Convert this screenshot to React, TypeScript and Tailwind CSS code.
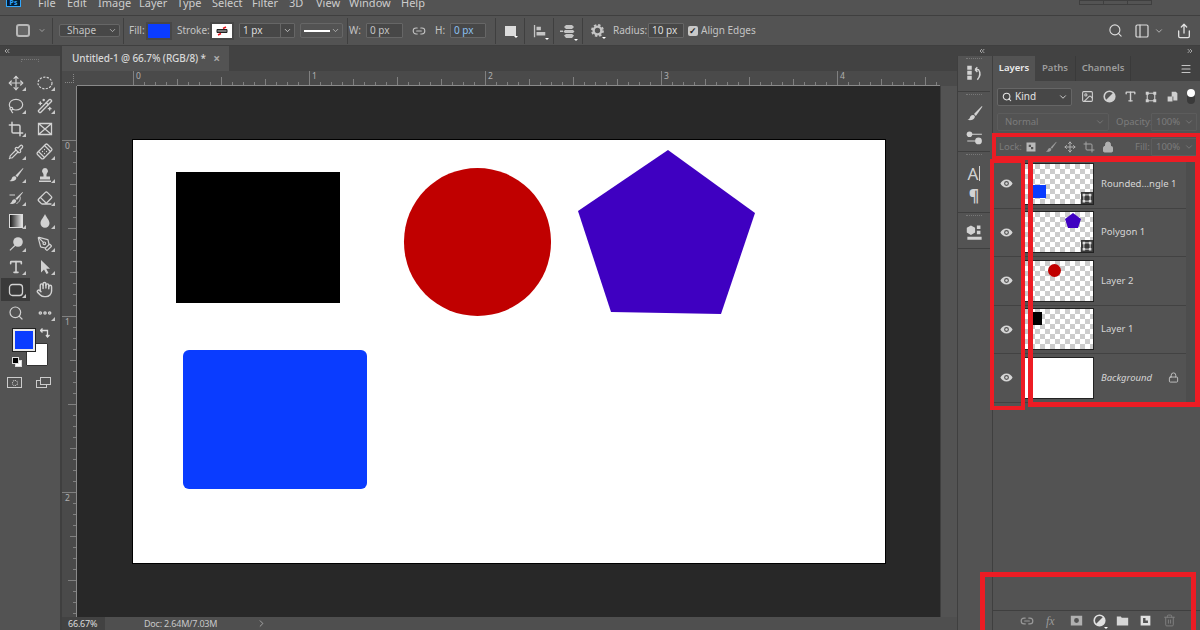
import type { ReactNode } from 'react'
import {
  Bandage, ChevronDown, ChevronRight, ChevronsLeft, ChevronsRight, Crop, Ellipsis, Eraser, Hand, Image,
  Lasso, Link2, Lock, Menu, Move, PanelLeft, PenTool, Pipette, Search, Share, Trash2, Type, WandSparkles,
} from 'lucide-react'

const font = { fontFamily: '"Noto Sans", "Open Sans", sans-serif' }
const menus = [
  ['File', 'w-[29px]'], ['Edit', 'w-[31px]'], ['Image', 'w-[41px]'], ['Layer', 'w-[38px]'], ['Type', 'w-[35px]'],
  ['Select', 'w-[40px]'], ['Filter', 'w-[37px]'], ['3D', 'w-[27px]'], ['View', 'w-[33px]'], ['Window', 'w-[52px]'], ['Help', 'w-[30px]'],
]

function Svg({ size = 16, className = '', children }: { size?: number; className?: string; children: ReactNode }) {
  return (
    <svg width={size} height={size} viewBox="0 0 16 16" fill="currentColor" className={className}>
      {children}
    </svg>
  )
}

const BrushIcon = ({ size = 16 }: { size?: number }) => (
  <Svg size={size}>
    <path d="M15 1 7.5 8.5l1.8 1.8L15.4 1.6z" />
    <path d="M6.6 9.3c-2 0-2.6 1.4-3 2.6-.3.9-1 1.5-2.3 2 2.8.9 6.2.3 7-2.4.3-1-.4-2.2-1.7-2.2z" />
  </Svg>
)

const HalfCircle = ({ size = 13, className = '' }: { size?: number; className?: string }) => (
  <Svg size={size} className={className}>
    <circle cx="8" cy="8" r="6.5" fill="none" stroke="currentColor" strokeWidth="2" />
    <path d="M12.6 3.4A6.5 6.5 0 0 1 3.4 12.6z" />
  </Svg>
)

const tools: { icon: ReactNode; active?: boolean; mark?: boolean }[] = [
  { icon: <Move size={16} strokeWidth={1.8} />, mark: true },
  { icon: <Svg><ellipse cx="8" cy="8" rx="7" ry="5.8" fill="none" stroke="currentColor" strokeWidth="1.2" strokeDasharray="2.2 1.3" /></Svg>, mark: true },
  { icon: <Lasso size={16} strokeWidth={1.8} />, mark: true },
  { icon: <WandSparkles size={16} strokeWidth={2} />, mark: true },
  { icon: <Crop size={16} strokeWidth={2.2} />, mark: true },
  { icon: <Svg><path d="M1.5 2.5h13v11h-13zM1.5 2.5l13 11M14.5 2.5l-13 11" fill="none" stroke="currentColor" strokeWidth="1.3" /></Svg> },
  { icon: <Pipette size={16} strokeWidth={1.8} />, mark: true },
  { icon: <Bandage size={17} strokeWidth={1.8} className="-rotate-45" />, mark: true },
  { icon: <BrushIcon />, mark: true },
  { icon: <Svg><path d="M8 1a3 3 0 0 0-2 5.2c.6.8.5 2 .5 3.3H3v3h10v-3H9.5c0-1.3-.1-2.5.5-3.3A3 3 0 0 0 8 1zM2 13.5h12V15H2z" /></Svg>, mark: true },
  { icon: <Svg><path d="M14.5 2 7.5 8.5 9 10l6-7.5zM6.5 9.3c-1.8 0-2.2 1.3-2.6 2.3-.3.9-1 1.4-2.2 1.9 2.5.9 5.8.3 6.5-2.3.2-1-.4-1.900-1.700-1.900z" /><path d="M12 6.5c1 3-1 6-3.5 7M1.5 5H7" fill="none" stroke="currentColor" /></Svg>, mark: true },
  { icon: <Eraser size={16} strokeWidth={2} />, mark: true },
  {
    icon: (
      <svg width="14" height="14" viewBox="0 0 14 14">
        <defs>
          <linearGradient id="grad">
            <stop offset="0" stopColor="#111" />
            <stop offset="1" stopColor="#eee" />
          </linearGradient>
        </defs>
        <rect x=".5" y=".5" width="13" height="13" fill="url(#grad)" stroke="#ddd" />
      </svg>
    ),
    mark: true,
  },
  { icon: <Svg><path d="M8 1c-.8 2.6-4.500 6-4.500 9.300a4.500 4.500 0 0 0 9 0C12.500 7 8.800 3.600 8 1z" /></Svg>, mark: true },
  { icon: <Svg><circle cx="10" cy="6" r="4.8" /><path d="M6.500 9 1.500 14l.8.8L7.300 10z" /></Svg>, mark: true },
  { icon: <PenTool size={16} strokeWidth={1.8} />, mark: true },
  { icon: <Type size={16} strokeWidth={2.4} />, mark: true },
  { icon: <Svg><path d="M4 1v12.500l3-3 2.500 4.500 2-1-2.300-4.300H13z" /></Svg>, mark: true },
  { icon: <Svg><rect x="1.5" y="2.5" width="13" height="11" rx="3" fill="none" stroke="currentColor" strokeWidth="1.3" /></Svg>, active: true, mark: true },
  { icon: <Hand size={17} strokeWidth={2} /> },
  { icon: <Search size={16} strokeWidth={1.8} /> },
  { icon: <Ellipsis size={16} strokeWidth={3.4} />, mark: true },
]

const layerRows = [
  { name: 'Rounded...ngle 1', thumb: <div className="absolute left-[8px] top-[21px] h-[13px] w-[13px] bg-[#0a3cff]" />, shape: true },
  {
    name: 'Polygon 1',
    thumb: (
      <svg className="absolute left-[40px] top-[1px]" width="16" height="16" viewBox="0 0 16 16">
        <path d="m8 0 8 6-3 9H3L0 6z" fill="#3f00c1" />
      </svg>
    ),
    shape: true,
  },
  { name: 'Layer 2', thumb: <div className="absolute left-[23px] top-[3px] h-[13px] w-[13px] rounded-full bg-[#c00000]" /> },
  { name: 'Layer 1', thumb: <div className="absolute left-[3px] top-[3px] h-[13px] w-[14px] bg-black" /> },
]

function Sep() {
  return <div className="h-[26px] w-px shrink-0 bg-[#3f3f3f]" />
}

function Field({ text, className = '' }: { text: string; className?: string }) {
  return (
    <div className={`flex h-[15px] shrink-0 items-center rounded-[1px] border border-[#666] bg-[#474747] pl-[3px] text-[10px] ${className}`}>
      {text}
    </div>
  )
}

function Corner() {
  return <div className="absolute bottom-[3px] right-[4px] h-0 w-0 border-b-[4px] border-l-[4px] border-b-[#c8c8c8] border-l-transparent" />
}

function Drop() {
  return <div className="absolute -bottom-[2px] -right-[2px] h-0 w-0 border-x-[2px] border-t-[2px] border-x-transparent border-t-white" />
}

function ToolPanel() {
  return (
    <div className="flex w-[62px] shrink-0 flex-col border-r-2 border-[#3f3f3f]">
      <div className="flex h-[10px] items-center bg-[#424242] pl-[3px] text-[#bbb]">
        <ChevronsLeft size={8} strokeWidth={2.5} />
      </div>
      <div className="mx-auto mt-[3px] h-[3px] w-[18px] border-x border-t border-dotted border-[#777]" />
      <div className="ml-px mt-[9px] grid w-[58px] grid-cols-2">
        {tools.map((tool, i) => (
          <div
            key={i}
            className={`relative flex h-[23px] w-[29px] items-center justify-center text-[#d2d2d2] ${tool.active ? 'bg-[#3a3a3a]' : ''}`}
          >
            {tool.icon}
            {tool.mark && <Corner />}
          </div>
        ))}
      </div>
      <div className="relative h-[46px]">
        <div className="absolute left-[26px] top-[19px] h-[23px] w-[22px] rounded-[1px] border border-[#333] bg-white" />
        <div className="absolute left-[13px] top-[5px] h-[22px] w-[22px] border-2 border-[#e8e8e8] bg-[#0a3cff] outline outline-1 outline-[#222]" />
        <svg className="absolute left-[40px] top-[4px] text-[#ddd]" width="10" height="10" viewBox="0 0 10 10" fill="none" stroke="currentColor" strokeWidth="1.3">
          <path d="M0.5 2.5h7v6M6 7l1.5 2L9.5 7M2.5 .5 .5 2.5l2 2" />
        </svg>
        <div className="absolute left-[15px] top-[36px] h-[7px] w-[7px] border border-[#ddd] bg-white" />
        <div className="absolute left-[12px] top-[33px] h-[7px] w-[7px] border border-[#ddd] bg-black" />
      </div>
      <div className="ml-[7px] mt-[7px] flex items-center">
        <div className="flex h-[11px] w-[15px] items-center justify-center border border-[#ccc]">
          <div className="h-[6px] w-[6px] rounded-full border border-dotted border-[#ddd]" />
        </div>
        <div className="relative ml-[14px] h-[11px] w-[15px]">
          <div className="absolute bottom-0 left-0 h-[8px] w-[11px] border border-[#ccc]" />
          <div className="absolute right-0 top-0 h-[8px] w-[11px] border border-[#ccc] bg-[#535353]" />
        </div>
      </div>
    </div>
  )
}

function HorizontalRuler() {
  const labels = ['0', '1', '2', '3', '4']
  return (
    <svg width="863" height="15" className="block">
      {Array.from({ length: 78 }, (_, i) => {
        const h = i % 16 === 0 ? 15 : i % 8 === 0 ? 8 : i % 4 === 0 ? 6 : 3
        const x = 56.5 + i * 11
        return <line key={i} x1={x} x2={x} y1={14} y2={14 - h} stroke="#808080" />
      })}
      {labels.map((label, i) => (
        <text key={label} x={59 + i * 176} y={8} fontSize="8.5" fill="#b0b0b0" style={font}>
          {label}
        </text>
      ))}
      <line x1="0" x2="863" y1="14.5" y2="14.5" stroke="#8a8a8a" />
    </svg>
  )
}

function VerticalRuler() {
  return (
    <svg width="15" height="531" className="block shrink-0">
      {Array.from({ length: 49 }, (_, i) => {
        const h = i % 16 === 0 ? 15 : i % 8 === 0 ? 8 : i % 4 === 0 ? 6 : 3
        const y = 54.5 + i * 11
        return <line key={i} x1={14} x2={14 - h} y1={y} y2={y} stroke="#808080" />
      })}
      {['0', '1', '2'].map((label, i) => (
        <text key={label} x={3} y={63 + i * 176} fontSize="8.5" fill="#b0b0b0" style={font}>
          {label}
        </text>
      ))}
      <line x1="14.5" x2="14.5" y1="0" y2="531" stroke="#8a8a8a" />
    </svg>
  )
}

function Workspace() {
  return (
    <div className="flex w-[895px] shrink-0 flex-col">
      <div className="flex h-[25px] shrink-0 bg-[#424242]">
        <div className="flex w-[167px] items-center whitespace-nowrap bg-[#535353] pl-[10px] text-[10px] font-medium tracking-[-0.1px] text-[#d8d8d8]">
          Untitled-1 @ 66.7% (RGB/8) *
          <span className="ml-auto mr-[9px] text-[12px] font-bold leading-none text-[#aaa]">×</span>
        </div>
      </div>
      <div className="flex h-[15px] shrink-0 bg-[#4a4a4a]">
        <div className="flex h-[15px] w-[15px] items-center justify-center">
          <div className="h-[9px] w-[9px] border-b border-r border-dotted border-[#888]" />
        </div>
        <HorizontalRuler />
      </div>
      <div className="flex h-[531px] shrink-0 bg-[#4a4a4a]">
        <VerticalRuler />
        <div className="flex w-[863px] shrink-0 items-center justify-center bg-[#282828]">
          <div className="relative h-[423px] w-[752px] bg-white outline outline-1 outline-black">
            <div className="absolute left-[43px] top-[32px] h-[131px] w-[164px] bg-black" />
            <div className="absolute left-[271px] top-[28px] h-[148px] w-[147px] rounded-full bg-[#c00000]" />
            <svg className="absolute left-[445px] top-[10px]" width="177" height="164" viewBox="0 0 177 164">
              <path d="M90 0 177 63 143 164 33 162 0 61z" fill="#3f00c1" />
            </svg>
            <div className="absolute left-[50px] top-[210px] h-[139px] w-[184px] rounded-[6px] bg-[#0a3cff]" />
          </div>
        </div>
        <div className="w-[17px] border-l border-[#3f3f3f] bg-[#535353]" />
      </div>
      <div className="flex h-[13px] shrink-0 items-center bg-[#4f4f4f] text-[9px] tracking-[-0.2px] text-[#c8c8c8]">
        <div className="flex h-full w-[43px] items-center bg-[#424242] pl-[6px] text-[#dcdcdc]">66.67%</div>
        <div className="ml-[39px] w-[112px]">Doc: 2.64M/7.03M</div>
        <ChevronRight size={11} strokeWidth={1.5} />
      </div>
    </div>
  )
}

function DockGroup({ className, children }: { className: string; children: ReactNode }) {
  return (
    <div className={`flex flex-col items-center border-b border-[#3f3f3f] pt-[2px] text-[#d2d2d2] ${className}`}>
      <div className="mb-[5px] h-[3px] w-[16px] border-t border-dotted border-[#777]" />
      {children}
    </div>
  )
}

function Dock() {
  return (
    <div className="flex w-[33px] shrink-0 flex-col border-l border-[#3f3f3f]">
      <DockGroup className="h-[36px]">
        <Svg size={18} className="-mt-[2px]">
          <path d="M2 1.5h4V5H2zM2 6h4v3.5H2zM2 10.5h4V14H2z" />
          <path d="M9 5h3c1.8 2.5 1.5 6-1 9M9 5l2-2M9 5l2 2" fill="none" stroke="currentColor" strokeWidth="1.3" />
        </Svg>
      </DockGroup>
      <DockGroup className="h-[60px]">
        <div className="mt-[3px]"><BrushIcon size={17} /></div>
        <div className="mt-[6px]">
          <Svg size={18}>
            <path d="M5 5h10v1H5zM2 11h10v1H2z" />
            <circle cx="4" cy="5.5" r="2.5" />
            <circle cx="12" cy="11.5" r="3" />
          </Svg>
        </div>
      </DockGroup>
      <DockGroup className="h-[61px]">
        <span className="mt-[2px] flex h-[18px] items-center text-[17px] leading-none" style={font}>A<span className="ml-px h-[15px] w-px bg-[#d2d2d2]" /></span>
        <span className="mt-[5px] text-[16px] font-bold leading-none" style={font}>¶</span>
      </DockGroup>
      <DockGroup className="h-[36px]">
        <Svg size={19}>
          <path d="M5 2 8.5 4v4L5 10 1.5 8V4zM10 2h3v3h-3zM10 6.5h3v3h-3zM2 11.5h12V14H2z" />
        </Svg>
      </DockGroup>
    </div>
  )
}

function ShapeBadge() {
  return (
    <div className="absolute bottom-0 right-0 flex h-[12px] w-[12px] items-center justify-center bg-[#3a3a3a] text-[#ddd]">
      <Svg size={10}>
        <path d="M3 3h10v10H3z" fill="none" stroke="currentColor" strokeWidth="1.5" />
        <path d="M1 1h4v4H1zM11 1h4v4h-4zM1 11h4v4H1zM11 11h4v4h-4z" />
      </Svg>
    </div>
  )
}

function EyeIcon() {
  return (
    <Svg size={13}>
      <path fillRule="evenodd" d="M8 3C4.5 3 1.8 5.5.5 8c1.300 2.500 4 5 7.500 5s6.200-2.500 7.500-5C14.200 5.500 11.500 3 8 3zm0 8a3 3 0 1 1 0-6 3 3 0 0 1 0 6z" />
      <circle cx="8" cy="8" r="1.5" />
    </Svg>
  )
}

function LayerRow({ name, thumb, shape, italic, plain }: { name: string; thumb?: ReactNode; shape?: boolean; italic?: boolean; plain?: boolean }) {
  return (
    <div className="flex h-[48.5px] shrink-0 items-center border-b border-[#424242]">
      <div className="flex h-full w-[32px] shrink-0 items-center justify-center border-r border-[#424242] pr-[4px] text-[#d6d6d6]">
        <EyeIcon />
      </div>
      <div
        className={`relative h-[40px] w-[68px] shrink-0 outline outline-1 outline-[#222] ${plain ? 'bg-white' : 'bg-[conic-gradient(#ffffff_25%,#cccccc_0_50%,#ffffff_0_75%,#cccccc_0)] bg-[length:10px_10px]'}`}
      >
        {thumb}
        {shape && <ShapeBadge />}
      </div>
      <div className={`ml-[8px] whitespace-nowrap text-[9.5px] text-[#d6d6d6] ${italic ? 'italic' : ''}`}>{name}</div>
      {italic && <Lock size={11} strokeWidth={1.8} className="ml-[16px] text-[#d0d0d0]" />}
    </div>
  )
}

function LayersPanel() {
  return (
    <div className="ml-[2px] flex w-[208px] shrink-0 flex-col border-l border-[#3f3f3f]">
      <div className="flex h-[25px] shrink-0 items-center bg-[#424242] text-[9.5px] font-semibold text-[#9d9d9d]">
        <div className="flex h-full w-[42px] items-center justify-center bg-[#535353] text-[#ececec]">Layers</div>
        <div className="flex h-full w-[41px] items-center justify-center border-r border-[#3a3a3a]">Paths</div>
        <div className="flex h-full w-[55px] items-center justify-center border-r border-[#3a3a3a]">Channels</div>
        <Menu size={12} strokeWidth={2.2} className="ml-auto mr-[8px] text-[#c4c4c4]" />
      </div>
      <div className="flex h-[28px] shrink-0 items-center pl-[4px] pt-[3px] text-[#d0d0d0]">
        <div className="flex h-[18px] w-[75px] items-center rounded-[2px] border border-[#666] bg-[#474747] pl-[4px] text-[10px] text-[#e4e4e4]">
          <Search size={10} strokeWidth={2.5} />
          <span className="ml-[3px]">Kind</span>
          <ChevronDown size={10} className="ml-auto mr-[3px]" />
        </div>
        <Image size={13} className="ml-[9px]" strokeWidth={2} />
        <HalfCircle className="ml-[9px]" />
        <Type size={13} className="ml-[8px]" strokeWidth={2.6} />
        <Svg size={12} className="ml-[8px]">
          <path d="M3 3h10v10H3z" fill="none" stroke="currentColor" strokeWidth="1.5" />
          <path d="M1 1h4v4H1zM11 1h4v4h-4zM1 11h4v4H1zM11 11h4v4h-4z" />
        </Svg>
        <Svg size={13} className="ml-[9px]">
          <path d="M7 2h5l2 2v9H9V8H7zM2 8h6v6H2z" />
        </Svg>
        <div className="ml-[8px] flex h-[15px] w-[8px] flex-col items-center rounded-full bg-[#3a3a3a]">
          <div className="h-[8px] w-[8px] rounded-full bg-white" />
        </div>
      </div>
      <div className="flex h-[25px] shrink-0 items-center pl-[4px] pt-[1px] text-[9.5px] text-[#7c7c7c]">
        <div className="flex h-[18px] w-[112px] items-center rounded-[2px] border border-[#5c5c5c] pl-[7px]">
          Normal
          <ChevronDown size={10} className="ml-auto mr-[3px]" />
        </div>
        <span className="ml-[7px] w-[35px] whitespace-nowrap">Opacity:</span>
        <div className="flex h-[18px] w-[46px] items-center rounded-[1px] border border-[#5c5c5c] pl-[4px]">
          100%
          <ChevronDown size={10} className="ml-auto mr-[2px]" />
        </div>
      </div>
      <div className="flex h-[26px] shrink-0 items-center pl-[6px] text-[9.5px] text-[#7c7c7c]">
        <span className="w-[24px]">Lock:</span>
        <Svg size={12} className="ml-[2px] text-[#b8b8b8]">
          <path d="M2 2h12v12H2zm3 3v3h3V5zm3 3v3h3V8z" fillRule="evenodd" />
        </Svg>
        <div className="ml-[8px] text-[#9c9c9c]"><BrushIcon size={12} /></div>
        <Move size={12} strokeWidth={2} className="ml-[7px] text-[#b0b0b0]" />
        <Crop size={12} strokeWidth={2} className="ml-[7px] text-[#a4a4a4]" />
        <Lock size={12} strokeWidth={2} fill="currentColor" className="ml-[7px] text-[#b0b0b0]" />
        <span className="ml-[21px] w-[16px]">Fill:</span>
        <div className="flex h-[18px] w-[46px] items-center rounded-[1px] border border-[#5c5c5c] pl-[4px]">
          100%
          <ChevronDown size={10} className="ml-auto mr-[2px]" />
        </div>
      </div>
      <div className="flex h-[243px] shrink-0">
        <div className="flex w-[193px] shrink-0 flex-col">
          {layerRows.map((row) => (
            <LayerRow key={row.name} name={row.name} thumb={row.thumb} shape={row.shape} />
          ))}
          <LayerRow name="Background" italic plain />
        </div>
        <div className="flex-1 bg-[#4d4d4d]" />
      </div>
      <div className="flex-1" />
      <div className="flex h-[20px] shrink-0 items-center border-t border-[#3f3f3f] pl-[27px] text-[#9a9a9a]">
        <Link2 size={14} strokeWidth={2} />
        <span className="ml-[12px] w-[14px] text-[12px] italic" style={{ fontFamily: '"Liberation Serif", serif' }}>fx</span>
        <Svg size={13} className="ml-[10px] text-[#b0b0b0]">
          <path fillRule="evenodd" d="M1 2h14v12H1zm7 3a3 3 0 1 0 0 6 3 3 0 0 0 0-6z" />
        </Svg>
        <div className="relative ml-[10px] flex text-[#e0e0e0]"><HalfCircle /><Drop /></div>
        <Svg size={13} className="ml-[10px] text-[#d6d6d6]">
          <path d="M1 3h5l1 1.5h8V14H1z" />
        </Svg>
        <Svg size={13} className="ml-[10px] text-[#e0e0e0]">
          <path fillRule="evenodd" d="M2 2h12v12H2zm3 3v6h6V8H8V5z" />
        </Svg>
        <Trash2 size={13} strokeWidth={1.8} className="ml-[11px] text-[#808080]" />
      </div>
    </div>
  )
}

export default function App() {
  return (
    <div className="relative flex h-[630px] w-[1200px] flex-col overflow-hidden bg-[#535353] text-[#cdcdcd]" style={font}>
      <div className="flex h-[16px] shrink-0 items-start overflow-hidden border-b border-[#3f3f3f]">
        <div className="ml-[6px] flex h-[8px] w-[15px] -translate-y-[1px] items-end justify-center border border-[#31a8ff] bg-[#001e36] text-[7px] font-bold leading-none text-[#31a8ff]">Ps</div>
        <div className="-mt-[5px] ml-[17px] flex text-[11px] leading-[15px]">
          {menus.map(([label, width]) => (
            <span key={label} className={width}>{label}</span>
          ))}
        </div>
        <div className="ml-[648px] flex h-[5px] w-[73px] border border-[#3f3f3f]">
          <div className="flex-1 border-r border-[#3f3f3f]" />
          <div className="flex-1 border-r border-[#3f3f3f]" />
          <div className="flex-1" />
        </div>
      </div>

      <div className="flex h-[30px] shrink-0 items-center border-b border-[#3f3f3f] text-[10px] text-[#c4c4c4]">
        <div className="ml-[16px] h-[13px] w-[14px] rounded-[3px] border-2 border-[#b8b8b8] bg-[#666]" />
        <ChevronDown size={9} className="ml-[8px] w-[8px]" />
        <div className="ml-[6px]"><Sep /></div>
        <div className="ml-[6px] flex h-[13px] w-[61px] items-center rounded-[2px] border border-[#666] bg-[#474747] pl-[7px]">
          Shape
          <ChevronDown size={9} className="ml-auto mr-[2px]" />
        </div>
        <div className="ml-[3px]"><Sep /></div>
        <span className="ml-[5px] w-[14px]">Fill:</span>
        <div className="ml-[3px] h-[18px] w-[26px] border-2 border-[#474747] bg-[#0a3cff]" />
        <span className="ml-[5px] w-[28px]">Stroke:</span>
        <div className="ml-[5px] flex h-[18px] w-[24px] items-center justify-center border-2 border-[#474747] bg-white">
          <svg width="14" height="10" viewBox="0 0 14 10">
            <path d="M2 3.5h10v3H2z" fill="#777" stroke="#222" />
            <path d="M3 9 6 7.5M8 2.5 11 1" stroke="#e8141c" strokeWidth="1.5" />
          </svg>
        </div>
        <div className="ml-[5px] flex h-[15px] w-[56px] items-center rounded-[1px] border border-[#666] bg-[#474747] pl-[3px] text-[#ddd]">
          1 px
          <div className="ml-auto flex h-full w-[14px] items-center justify-center border-l border-[#666]"><ChevronDown size={9} /></div>
        </div>
        <div className="ml-[5px] flex h-[15px] w-[43px] items-center rounded-[2px] border border-[#666] pl-[3px]">
          <div className="h-[2px] w-[26px] bg-white" />
          <ChevronDown size={9} className="ml-auto mr-[2px]" />
        </div>
        <div className="ml-[4px]"><Sep /></div>
        <span className="ml-px w-[13px]">W:</span>
        <Field text="0 px" className="ml-[4px] w-[37px]" />
        <Link2 size={14} strokeWidth={1.8} className="ml-[9px]" />
        <span className="ml-[9px] w-[11px]">H:</span>
        <Field text="0 px" className="ml-[4px] w-[36px] text-[#8cc0f0]" />
        <div className="ml-[9px]"><Sep /></div>
        <div className="relative ml-[9px] h-[10px] w-[11px] bg-[#dcdcdc]"><Drop /></div>
        <div className="ml-[8px]"><Sep /></div>
        <div className="relative ml-[8px] flex">
          <Svg size={14}>
            <path d="M1 1h1.5v14H1zM4 3h5v4H4zM4 9h10v4H4z" />
          </Svg>
          <Drop />
        </div>
        <div className="ml-[6px]"><Sep /></div>
        <div className="relative ml-[6px] flex">
          <Svg size={16}>
            <path d="M6 2h6l2 2-2 2H6L4 4zM5 7h8l1.500 1.500L13 10H5L3.500 8.500zM6 11h6l2 1.500L12 15H6l-2-2.500zM0 7.500h3V9H0z" />
          </Svg>
          <Drop />
        </div>
        <div className="ml-[6px]"><Sep /></div>
        <div className="relative ml-[8px] flex">
          <Svg size={13}>
            <circle cx="8" cy="8" r="4.8" fill="none" stroke="currentColor" strokeWidth="3" />
            <circle cx="8" cy="8" r="6.8" fill="none" stroke="currentColor" strokeWidth="2.2" strokeDasharray="3 2.34" />
          </Svg>
          <Drop />
        </div>
        <span className="ml-[9px] w-[31px]">Radius:</span>
        <Field text="10 px" className="ml-[4px] w-[36px] text-[#ddd]" />
        <div className="ml-[4px] flex h-[10px] w-[10px] items-center justify-center rounded-[2px] bg-[#c8c8c8] text-[9px] font-bold leading-none text-[#222]">✓</div>
        <span className="ml-[3px] whitespace-nowrap">Align Edges</span>
        <Search size={15} strokeWidth={1.8} className="ml-auto text-[#dcdcdc]" />
        <PanelLeft size={16} strokeWidth={1.8} className="ml-[11px] text-[#dcdcdc]" />
        <ChevronDown size={10} className="ml-[4px]" />
        <Share size={16} strokeWidth={2} className="ml-[12px] mr-[8px] text-[#e0e0e0]" />
      </div>

      <div className="flex min-h-0 flex-1">
        <ToolPanel />
        <Workspace />
        <div className="flex w-[243px] shrink-0 flex-col">
          <div className="flex h-[10px] shrink-0 items-center justify-between bg-[#424242] px-[6px] pl-[21px] text-[#bbb]">
            <ChevronsLeft size={8} strokeWidth={2.5} />
            <ChevronsRight size={8} strokeWidth={2.5} />
          </div>
          <div className="flex min-h-0 flex-1">
            <Dock />
            <LayersPanel />
          </div>
        </div>
      </div>

      <div className="absolute left-[992px] top-[133px] h-[27px] w-[208px] border-4 border-[#ed1c24]" />
      <div className="absolute left-[990px] top-[159px] h-[251px] w-[35px] border-4 border-[#ed1c24]" />
      <div className="absolute left-[1028px] top-[157px] h-[250px] w-[172px] border-[5px] border-[#ed1c24]" />
      <div className="absolute left-[980px] top-[572px] h-[70px] w-[216px] border-[5px] border-[#ed1c24]" />
    </div>
  )
}
